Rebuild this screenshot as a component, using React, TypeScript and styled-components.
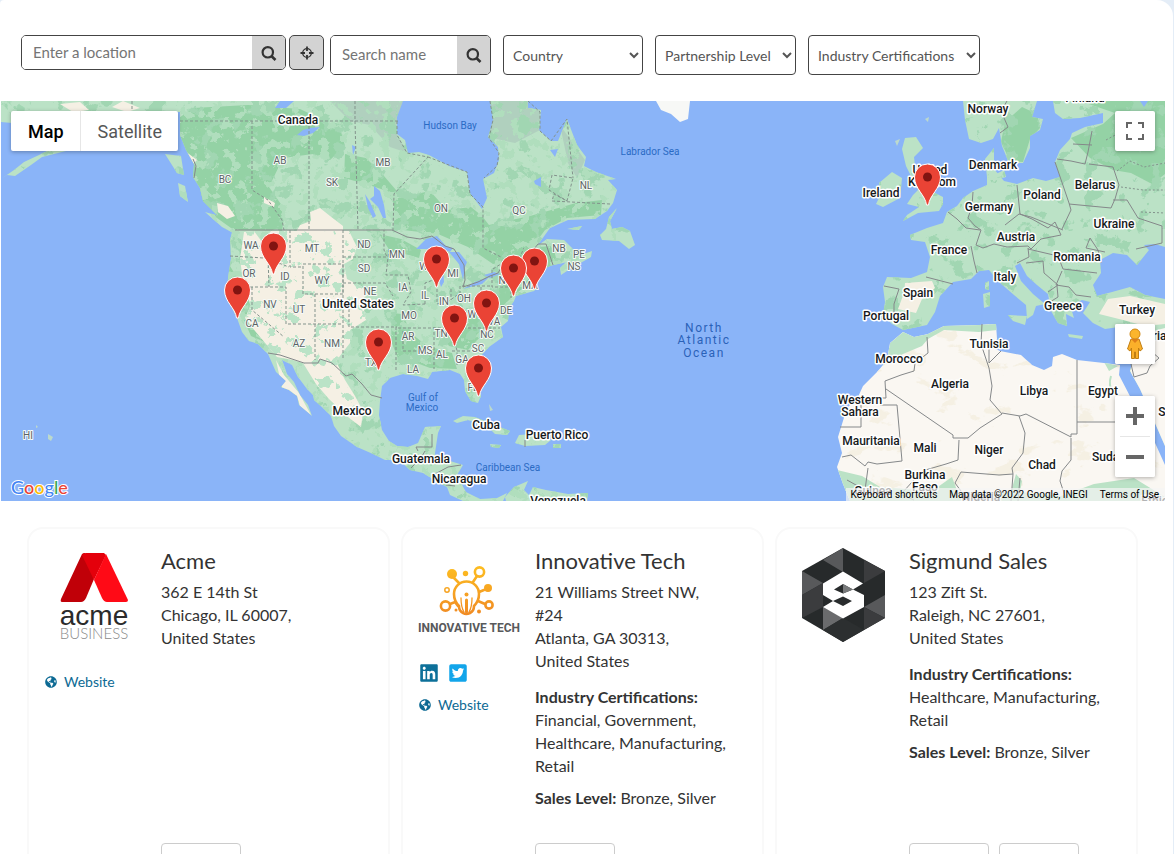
import React from "react";
import styled, { createGlobalStyle } from "styled-components";
import { FaGlobeAmericas, FaLinkedin, FaTwitterSquare } from "react-icons/fa";

const GlobalStyle = createGlobalStyle`
  * { box-sizing: border-box; }
  body {
    margin: 0;
    background: #e4edf7;
    color: #333;
    font-family: Lato, "Open Sans", sans-serif;
    font-size: 16px;
  }
  button, input, select { font-family: inherit; margin: 0; }
`;

const Page = styled.main`
  height: 100vh;
  margin-right: 1px;
  overflow-y: auto;
  scrollbar-width: none;
  background: #fff;
  border-radius: 4px 16px 0 0;
`;

const Filters = styled.form`
  display: flex;
  align-items: flex-start;
  gap: 12px;
  padding: 35px 21px 26px;
`;

const LocationFields = styled.div`
  display: flex;
  gap: 3px;
  margin-right: -6px;
`;

const SearchGroup = styled.div<{ $width: number; $height: number }>`
  display: flex;
  width: ${(p) => p.$width}px;
  height: ${(p) => p.$height}px;
  border: 1px solid #444;
  border-radius: 5px;
  overflow: hidden;
`;

const TextField = styled.input`
  flex: 1;
  min-width: 0;
  border: 0;
  padding: 0 11px 2px;
  font-size: 15px;
  color: #333;
  background: #fff;
  &::placeholder { color: #757575; opacity: 1; }
`;

const IconButton = styled.button`
  display: flex;
  align-items: center;
  justify-content: center;
  width: 33px;
  padding: 0;
  border: 0;
  background: #d3d3d3;
  color: #333;
`;

const LocateButton = styled(IconButton)`
  width: 35px;
  height: 35px;
  border: 1px solid #444;
  border-radius: 5px;
`;

const FilterSelect = styled.select<{ $width: number }>`
  width: ${(p) => p.$width}px;
  height: 40px;
  padding: 0 0 0 5px;
  border: 1px solid #444;
  border-radius: 4px;
  background: #fff;
  color: #555;
  font-size: 14px;
`;

const MapFrame = styled.section`
  position: relative;
  height: 400px;
  margin: 0 8px 0 1px;
  overflow: hidden;
  background: #8ab4f8;
  font-family: Roboto, sans-serif;
`;

const MapDrawing = styled.svg`
  display: block;
  width: 100%;
  height: 100%;
`;

const MapTypes = styled.div`
  position: absolute;
  top: 10px;
  left: 10px;
  display: flex;
  height: 40px;
  background: #fff;
  border-radius: 2px;
  box-shadow: 0 1px 4px rgba(0, 0, 0, 0.3);
`;

const MapType = styled.button<{ $active?: boolean }>`
  padding: 0 16px 0 17px;
  border: 0;
  background: none;
  font-size: 18px;
  font-weight: ${(p) => (p.$active ? 500 : 400)};
  color: ${(p) => (p.$active ? "#000" : "#565656")};
  & + & { border-left: 1px solid #e6e6e6; }
`;

const MapControl = styled.button`
  display: flex;
  align-items: center;
  justify-content: center;
  width: 40px;
  height: 40px;
  padding: 0;
  border: 0;
  border-radius: 2px;
  background: #fff;
  color: #666;
`;

const FullscreenControl = styled(MapControl)`
  position: absolute;
  top: 10px;
  right: 10px;
  box-shadow: 0 1px 4px rgba(0, 0, 0, 0.3);
`;

const MapSideControls = styled.div`
  position: absolute;
  right: 10px;
  bottom: 24px;
  display: flex;
  flex-direction: column;
  gap: 32px;
`;

const ControlBox = styled.div`
  background: #fff;
  border-radius: 2px;
  box-shadow: 0 1px 4px rgba(0, 0, 0, 0.3);
`;

const ControlDivider = styled.div`
  height: 1px;
  margin: 0 5px;
  background: #e6e6e6;
`;

const Attribution = styled.div`
  position: absolute;
  right: 0;
  bottom: 0;
  display: flex;
  gap: 12px;
  padding: 0 6px 0 5px;
  background: rgba(245, 245, 245, 0.7);
  font-size: 10px;
  line-height: 13px;
  color: #000;
`;

const AttributionButton = styled.button`
  padding: 0;
  border: 0;
  background: none;
  font-size: 10px;
  line-height: 13px;
  color: #000;
`;

const AttributionLink = styled.a`
  color: #000;
  text-decoration: none;
`;

const Cards = styled.section`
  display: grid;
  grid-template-columns: repeat(3, 1fr);
  gap: 11px;
  padding: 26px 35px 26px 27px;
`;

const Card = styled.article`
  display: grid;
  grid-template-columns: 100px 1fr;
  column-gap: 16px;
  min-height: 370px;
  padding: 16px 24px 18px 16px;
  border: 2px solid #f9f9f9;
  border-radius: 16px;
`;

const Side = styled.div`
  display: flex;
  flex-direction: column;
  gap: 12px;
`;

const LogoBox = styled.div`
  width: 100px;
  height: 104px;
  svg { overflow: visible; }
`;

const Social = styled.div`
  display: flex;
  gap: 9px;
  margin-top: 2px;
  & + a { margin-top: 0; }
`;

const SocialLink = styled.a<{ $color: string }>`
  display: flex;
  color: ${(p) => p.$color};
`;

const SiteLink = styled.a`
  display: flex;
  align-items: center;
  gap: 7px;
  margin-top: 11px;
  color: #0d6a94;
  font-size: 14px;
  line-height: 20px;
  text-decoration: none;
`;

const Info = styled.div`
  display: flex;
  flex-direction: column;
  line-height: 23px;
`;

const Name = styled.h2`
  margin: 0 0 3px;
  font-size: 22px;
  font-weight: 400;
  line-height: 32px;
`;

const Address = styled.address`
  font-style: normal;
`;

const Detail = styled.p<{ $first?: boolean }>`
  margin: ${(p) => (p.$first ? 13 : 9)}px 0 0;
`;

const Actions = styled.div`
  display: flex;
  gap: 10px;
  margin-top: auto;
`;

const Action = styled.button`
  width: 80px;
  height: 34px;
  border: 1px solid #ccc;
  border-radius: 4px;
  background: #fff;
`;

const SearchIcon = () => (
  <svg width="18" height="18" viewBox="0 0 18 18" fill="none" stroke="currentColor" aria-hidden="true">
    <circle cx="7.800" cy="8.300" r="5.200" strokeWidth="2.200" />
    <path d="M11.600 12.200L15.500 16" strokeWidth="2.600" />
  </svg>
);

const LocateIcon = () => (
  <svg width="16" height="16" viewBox="0 0 16 16" fill="none" stroke="currentColor" aria-hidden="true">
    <circle cx="8" cy="8" r="4.300" strokeWidth="1.300" />
    <path d="M8 1.500v4.500M8 10v4.500M1.500 8h4.500M10 8h4.500" strokeWidth="1.800" />
  </svg>
);

const AcmeLogo = () => (
  <svg width="100" height="104" viewBox="45 545 100 104" role="img" aria-label="Acme Business">
    <path d="M82 554Q83 553 85 553L94 579 86 598Q84 602 81 602H62Q60 602 61 599Z" fill="#c00008" />
    <path d="M82 555Q83 553 86 553H104L106 555 94 580Z" fill="#e4000b" />
    <path d="M106 554L128 600Q128 602 126 602H107Q104 602 102 598L94 580Z" fill="#ff0a16" />
    <text x="94" y="625" textAnchor="middle" fontFamily="Liberation Sans" fontSize="28" fill="#2b2b2b">acme</text>
    <text x="94" y="639" textAnchor="middle" fontFamily="Lato" fontWeight="300" fontSize="15" fill="#8a8a8a">BUSINESS</text>
  </svg>
);

const InnovativeLogo = () => (
  <svg width="100" height="104" viewBox="419 545 100 104" role="img" aria-label="Innovative Tech">
    <defs>
      <linearGradient id="amber" x1="0" y1="566" x2="0" y2="616" gradientUnits="userSpaceOnUse">
        <stop offset="0" stopColor="#fdbd20" />
        <stop offset="1" stopColor="#f08a24" />
      </linearGradient>
    </defs>
    <g stroke="url(#amber)" strokeWidth="2.600" fill="none" strokeLinecap="round">
      <path d="M463 613Q459 611 459 606Q454 601 454 594A12.500 12.500 0 0 1 479 594Q479 601 474 606Q474 611 470 613Q466 615 463 613" />
      <path d="M461 598Q461 607 464 612M472 598Q472 607 469 612" strokeWidth="1.300" />
      <path d="M466.500 600V612" strokeWidth="3" />
      <circle cx="479.500" cy="572" r="4.600" />
      <circle cx="445.500" cy="606" r="4.600" />
      <circle cx="489" cy="605" r="3.600" />
      <circle cx="447" cy="590" r="2.200" strokeWidth="1.500" />
      <path d="M477 576L473 582M454 578L459 583M450 604L455 602L458 606M479 592L484 590M478 601L485 604" />
    </g>
    <g fill="url(#amber)">
      <circle cx="452" cy="574" r="5" />
      <circle cx="465.500" cy="573.500" r="2.700" />
      <circle cx="488" cy="588" r="4" />
      <circle cx="466.500" cy="594.500" r="2" />
      <circle cx="479" cy="611.500" r="2" />
      <circle cx="456" cy="610" r="1.500" />
    </g>
    <text x="469" y="632" textAnchor="middle" fontFamily="Roboto" fontWeight="700" fontSize="12" fill="#58595b">INNOVATIVE TECH</text>
  </svg>
);

const SigmundLogo = () => (
  <svg width="100" height="104" viewBox="793 545 100 104" role="img" aria-label="Sigmund Sales">
    <path d="M843 548L885 571V618L843 642L802 618V571Z" fill="#272a2b" />
    <path d="M843 548V572L823 560ZM802 571L823 583 802 595ZM885 595V618L864 607Z" fill="#58595b" />
    <path d="M864 560L885 571 864 583ZM802 595L823 607 802 618ZM823 595V607L802 595 823 583ZM864 607L885 618 864 630Z" fill="#3b3c3e" />
    <path d="M823 607L843 618 823 630Z" fill="#6a6b6d" />
    <path d="M843 618L864 630 843 642 823 630Z" fill="#2c2f30" />
    <path d="M843 571.500L863 583.500 853 589.500 864 595V607L843 618.500 823 607 833 601 823 595V583.500Z" fill="#fff" />
    <path d="M843 584L853 589.500 843 593.500 834 589.500ZM843 596.500L852 601 843 606 833 601Z" fill="#292c2d" />
    <path d="M843 584L853 589.500 843 593.500Z" fill="#77797a" />
  </svg>
);

const FullscreenIcon = () => (
  <svg width="18" height="18" viewBox="0 0 18 18" fill="none" stroke="currentColor" strokeWidth="2" aria-hidden="true">
    <path d="M1 6V1H6M12 1H17V6M17 12V17H12M6 17H1V12" />
  </svg>
);

const PegmanIcon = () => (
  <svg width="18" height="32" viewBox="0 0 18 32" aria-hidden="true">
    <path d="M5 11H13L16.500 21 14 23 12.500 20V30.500H9.500V24H8.500V30.500H5.500V20L4 23 1.500 21Z" fill="#fbb02a" stroke="#c17f13" strokeWidth="1" />
    <path d="M5 11H13L9 15Z" fill="#df7f1a" />
    <circle cx="9" cy="6" r="5" fill="#fbb52c" stroke="#cf8613" />
  </svg>
);

const northAmerica =
  "M28 101H180L180 135L186 150L194 164L193 177L200 188L203 201L215 213L226 225L233 229L230 240L231 258L228 278L227 290L230 304L237 318L242 332L249 341L258 344L268 354L276 372L286 381L281 387L289 390L297 396L299 405L312 416L308 405L300 395L294 382L287 374L282 360L292 365L298 377L307 389L313 395L314 400L324 409L331 416L334 426L341 436L357 447L373 454L385 460L399 460L410 470L423 473L436 481L447 487L450 495L463 501H503L507 493L497 498L480 499L466 492L461 483L457 475L463 465L450 461L435 459L435 453L438 433L441 426L425 427L418 443L408 447L397 446L389 441L382 430L379 415L380 401L382 386L390 378L403 374L417 376L428 379L432 372L450 370L460 374L464 380L465 391L471 401L478 403L481 396L478 381L473 372L477 360L489 347L503 337L501 327L508 321L509 308L514 301L516 296L534 291L537 288L533 278L545 268L553 265L568 262L576 256L572 248L564 240L547 239L537 246L550 228L568 220L595 219L607 211L613 203L617 190L608 180L616 179L596 172L584 166L586 157L577 145L567 119L558 141L551 141L539 130L541 110L528 108V101Z";
const europe =
  "M963 101L965 120L969 139L981 143L993 139L999 128L1002 146L1009 163L1023 163L1030 148L1030 136L1040 130L1043 119L1032 117L1037 101H1053L1055 113L1063 119L1080 118L1103 113V123L1085 127L1072 133L1070 139L1060 150L1055 162L1060 177L1046 181L1033 178L1017 184L1004 181L999 175L994 169L994 148L985 159L987 177L987 185L973 191L963 198L957 206L947 212L943 223L927 228L910 235L911 240L925 242L930 257L927 272L911 278L887 277L883 287L885 302L883 315L892 324L903 330L927 325L935 312L940 296L953 282L971 279L979 271L989 270L999 282L1014 295L1026 305L1027 319L1033 315L1036 306L1045 304L1033 294L1021 281L1015 266L1020 263L1027 276L1037 285L1048 294L1051 311L1058 323L1067 326L1066 314L1074 318L1070 305L1082 300L1090 302L1083 313L1093 323L1105 329L1119 327L1130 329L1147 329L1144 340L1138 348L1133 360L1130 371L1140 389L1151 414L1165 446V299L1145 295L1130 287L1112 292L1097 296L1093 285L1101 273L1100 260L1113 253L1127 255L1137 265L1149 250L1144 245L1155 244L1165 247V101Z";
const africa =
  "M903 332L890 343L887 360L878 371L863 386L858 397L847 408L838 437L842 453L837 467L843 484L850 501H1165V465L1151 434L1133 402L1119 375L1120 365L1104 363L1077 360L1062 354L1053 357L1052 366L1044 370L1032 365L1021 355L1000 351L992 347L997 339L996 324L980 325L944 326L928 334L914 337Z";
const islands = [
  "M905 138L916 137L923 148L914 157L915 166L926 181L929 190L943 197L943 204L939 211L918 213L903 221L907 215L919 207L907 204L913 195L918 190L912 178L906 166L902 149Z",
  "M879 183L892 172L902 178L900 198L883 207L876 204L881 194Z",
  "M617 208L609 217L606 229L600 235L602 240L619 241L629 249L635 245L630 231L622 227L612 229L610 221Z",
  "M453 421L463 416L475 417L492 424L510 431L507 435L495 434L487 426L468 420L457 423Z",
  "M519 435L533 434L551 440L545 445L525 446L515 443Z",
  "M553 444L561 444L561 448L553 448Z M490 444L501 445L499 448L491 447Z",
  "M505 497L514 487L528 481L524 490L529 495L533 487L546 490L568 494L588 493L587 501H506Z",
  "M983 294L990 292L990 306L984 308Z M985 283L989 281L989 290L985 289Z M1008 315L1027 316L1025 325L1013 321Z",
  "M1068 334L1083 336L1082 339L1069 337Z M992 176L1004 170L1006 177L999 179Z M1119 337L1129 334L1127 340Z",
  "M205 212L219 216L232 227L233 233L222 227Z M178 183L185 186L188 202L180 196Z M165 154L181 156L184 175L177 173Z",
  "M1 179L14 170L24 162L39 155L47 151L56 148L66 151L42 157L31 165L15 176L7 175Z",
  "M567 229L582 226L579 230ZM560 268L566 262L575 257L592 251L591 257L570 269L561 275Z",
  "M1 101H180V112H22L12 123L1 122Z",
];
const desert =
  "M244 232L254 231L262 242L271 231H349L357 247L353 259L344 264L347 279L361 286L369 294L362 299L366 320L350 330V343L336 361L345 380L355 396L363 411L361 427L348 417L329 399L316 384L303 363L293 360L277 357L255 331L245 318L251 305L244 288L240 259Z";
const forest = [
  "M176 120L193 108L248 105L300 109L340 128L345 146L330 160L313 154L283 158L269 187L285 210L282 231L231 230L230 266L244 289L252 310L267 343L251 336L239 309L228 292L231 228L210 213L196 192Z",
  "M394 199L430 191L447 210L471 207L482 216L489 225L530 216L576 203L602 200L601 215L567 218L545 230L534 245L521 259L493 264L468 247L438 234L394 229Z",
  "M494 276L517 260L538 247L553 246L557 262L534 280L514 295L494 315L481 336L468 350L449 346L444 338L464 319L486 304Z",
  "M1022 107L1037 114L1040 128L1030 139L1023 162L1010 161L1001 142L1005 122Z",
  "M1080 101H1165V174L1152 184L1131 173L1113 170L1090 158L1071 138L1103 124L1115 113Z",
  "M392 313L402 314L412 334L427 346L452 353L457 369L430 368L414 362L399 361L391 341Z",
  "M379 234L401 239L421 250L419 258L409 255L390 251Z",
  "M345 154L366 158L384 176L396 190V206L384 190L366 184L344 178Z",
];
const water = [
  "M403 101L397 117L397 134L405 140L408 153L419 152L429 155L449 166L467 172L470 193L482 209L487 198L483 179L494 173L499 160L498 147L488 137L493 120L490 101Z",
  "M416 249L426 239L437 236L446 246L453 248L450 252L437 247L427 249Z",
  "M441 287L438 277L440 259L446 253L443 267L444 282Z",
  "M449 252L459 252L467 262L465 267L463 280L459 264Z",
  "M463 289L475 282L489 277L482 284Z M484 275L494 272L500 274L490 278Z",
  "M374 186L380 191L384 205L386 218L383 218L378 207L370 199L374 196Z M365 194L370 202L376 216L373 218L368 208Z",
  "M297 135L303 130L310 128L320 127L313 133L304 136Z M275 108L280 101H294L286 108Z M352 145L356 147L353 155Z",
  "M550 150L558 149L555 157ZM534 181L541 177L541 187L535 184Z M1140 101L1148 101L1144 107Z",
];
const dashed =
  "M132 101V112M180 121H398M252 121V190L268 200L282 220L284 230M309 121V230M355 101V121L358 230M397 121V135L407 153L428 157L394 194L393 230M428 157L467 172L470 194L483 207V248L501 257M490 101L493 120L489 138L499 153L497 166L484 178M528 101L540 112L540 131L551 141L567 119L573 178M610 204L552 201L554 194L567 201L573 178L552 175L549 190L567 201M343 230V358M343 257H387L384 250V230M343 283H385L393 296M303 264H343V294H303ZM290 230V267H303M230 256L264 258L276 262L289 267M240 287H286V324H343M252 287V310L284 337M268 255L269 287M315 294V360M349 299V327H397M389 249L386 275H408L411 292L403 305L425 304M398 328H500M396 327V370M403 331V351H423M434 327L434 369M452 328L457 351V365M452 351L470 351M425 304V283L436 279M437 289V304L449 301L460 293V286H492M451 289V300M481 287V303L459 326M492 270V287H511V298M493 269L504 262L518 261L524 248M519 270H533M522 260V277";
const borders =
  "M235 230H392L407 237L420 239L432 236L445 246L454 249L464 265L465 280L463 287L478 282L490 276L498 273L504 263L511 259H526L538 244L546 244L553 265M268 353L280 355L304 363H318L320 359L332 363L346 376L352 374L362 384L371 395L382 398M418 451L416 447H432V434M411 468L421 458L425 451M435 474L448 467L461 465M446 485L455 486M193 159L196 166L194 178M525 447V440";
const euroBorders =
  "M1000 133L1008 127L1001 111L1007 101M973 192L972 206L968 218L975 226L981 230L976 245L983 248L994 244L1007 247L1028 246L1031 249L1041 239L1061 235L1055 222L1048 228L1032 219L1020 214L1017 185M948 212L957 219L966 228L980 230M971 246L974 261L977 273M926 277L953 284M884 286L899 289L894 304L894 322M1017 263L1029 257L1028 248M1062 229L1071 210L1069 203L1055 162M1057 159L1071 161L1085 164L1088 152L1092 131M1092 145L1073 144M1089 164L1113 167L1119 185L1115 199L1111 208L1069 204M1113 200L1127 200L1138 218L1162 226L1162 243L1136 249M1101 263L1098 250L1090 238L1086 248L1105 252M1028 249L1058 256L1063 269L1097 273M1026 263L1043 261L1044 273L1058 285L1048 292M1057 286L1058 297L1050 302M1062 271L1056 285L1069 287L1076 295L1091 297M1005 225L1019 214L1031 217L1063 230M927 337L928 353L915 363L914 371L901 375L885 381L886 398L849 398M886 389L953 435V438L968 438L980 428L1002 414L990 400L992 386L989 368L981 344L982 324M1002 413L1020 416L1026 414L1071 437V434H1077V360M1019 416L1025 433L1023 453L1012 468L1013 474L999 475L961 472L955 483L961 491M959 440L958 460L946 464L922 471L903 492M840 427H861V405M880 405H897L902 461L877 464L868 462L865 466L851 455L842 457M1071 438V460L1062 471L1060 481L1066 499M1077 422H1117M1131 364L1134 377L1147 373L1150 366L1159 358L1145 346M868 468L865 490L847 480M989 344L989 363L1001 351M902 495L914 500M1013 474L1011 501M1020 478L1018 501";

const Pin = ({ x, y }: { x: number; y: number }) => (
  <g transform={`translate(${x} ${y})`}>
    <path d="M-1 28C-2 18-13 12-13 0A13 13 0 0 1 13 0C13 12 2 18 1 28Z" fill="#ea4335" stroke="#fff" strokeWidth="1" />
    <circle r="4.500" fill="#811411" />
  </g>
);

type Label = [string, number, number];
const countries: Label[] = [
  ["Canada", 298, 124], ["United States", 358, 308], ["Mexico", 352, 415], ["Cuba", 486, 429],
  ["Puerto Rico", 557, 439], ["Guatemala", 421, 463], ["Nicaragua", 459, 483], ["Venezuela", 558, 505],
  ["Norway", 988, 113], ["Finland", 1085, 102], ["Denmark", 993, 169], ["United", 930, 174],
  ["Kingdom", 932, 186], ["Ireland", 881, 197], ["Belarus", 1095, 189], ["Poland", 1042, 199],
  ["Germany", 989, 211], ["Ukraine", 1114, 228], ["Austria", 1016, 241], ["France", 949, 254],
  ["Romania", 1077, 261], ["Italy", 1005, 281], ["Spain", 918, 297], ["Greece", 1063, 310],
  ["Turkey", 1137, 314], ["Portugal", 886, 320], ["Tunisia", 989, 348], ["Morocco", 899, 363],
  ["Syria", 1153, 340], ["Algeria", 950, 388], ["Libya", 1034, 395], ["Egypt", 1103, 395], ["Western", 860, 404],
  ["Sahara", 860, 416], ["Mauritania", 871, 445], ["Mali", 925, 452], ["Niger", 989, 454],
  ["Sudan", 1109, 461], ["Chad", 1042, 469], ["Burkina", 925, 479], ["Faso", 925, 491],
  ["Guinea", 873, 495], ["Nigeria", 981, 501], ["Ethiopia", 1163, 505], ["S", 1162, 416],
];
const states: Label[] = [
  ["AB", 280, 164], ["BC", 225, 183], ["MB", 383, 166], ["SK", 332, 186], ["ON", 441, 212], ["QC", 519, 214],
  ["NL", 586, 189], ["NB", 559, 252], ["PE", 579, 258], ["NS", 574, 270], ["WA", 251, 249], ["MT", 312, 252],
  ["OR", 249, 277], ["ID", 285, 280], ["WY", 322, 284], ["ND", 364, 248], ["SD", 364, 272], ["MN", 397, 258],
  ["WI", 425, 270], ["MI", 453, 277], ["NE", 370, 295], ["IA", 403, 291], ["IL", 425, 299], ["IN", 444, 305],
  ["OH", 464, 302], ["NY", 505, 284], ["MA", 530, 289], ["DE", 506, 314], ["NV", 270, 308], ["UT", 299, 313],
  ["CA", 252, 327], ["AZ", 299, 347], ["NM", 332, 347], ["MO", 409, 319], ["AR", 408, 340], ["TN", 441, 337],
  ["WV", 475, 318], ["VA", 494, 325], ["NC", 487, 338], ["SC", 478, 352], ["MS", 425, 354], ["AL", 442, 358],
  ["GA", 462, 363], ["LA", 413, 373], ["TX", 371, 366], ["FL", 473, 391], ["HI", 28, 439],
];
const seas: Label[] = [
  ["Hudson Bay", 450, 129], ["Labrador Sea", 650, 155], ["Gulf of", 423, 401], ["Mexico", 422, 411], ["Caribbean Sea", 508, 471],
];
const pins: [number, number][] = [
  [927, 177], [273, 246], [237, 290], [436, 259], [534, 261], [513, 268], [486, 303], [454, 318], [378, 342], [478, 368],
];

const WorldMap = () => (
  <MapDrawing viewBox="1 101 1164 400" preserveAspectRatio="xMidYMid slice" role="img" aria-label="Partner locations">
    <defs>
      <clipPath id="land">
        <path d={northAmerica} />
        <path d={europe} />
        {islands.map((d) => <path key={d} d={d} />)}
      </clipPath>
      <clipPath id="africa"><path d={africa} /></clipPath>
      <clipPath id="desert"><path d={desert} /></clipPath>
      <filter id="woods" x="0" y="0" width="100%" height="100%" colorInterpolationFilters="sRGB">
        <feTurbulence type="fractalNoise" baseFrequency="0.06" numOctaves="6" seed="8" />
        <feColorMatrix values="0 0 0 0 0.63  0 0 0 0 0.84  0 0 0 0 0.7  22 0 0 0 -13" />
      </filter>
      <filter id="clearings" x="0" y="0" width="100%" height="100%" colorInterpolationFilters="sRGB">
        <feTurbulence type="fractalNoise" baseFrequency="0.1" numOctaves="5" seed="21" />
        <feColorMatrix values="0 0 0 0 0.69  0 0 0 0 0.87  0 0 0 0 0.74  0 24 0 0 -14" />
      </filter>
      <filter id="scrub" x="0" y="0" width="100%" height="100%" colorInterpolationFilters="sRGB">
        <feTurbulence type="fractalNoise" baseFrequency="0.09" numOctaves="5" seed="3" />
        <feColorMatrix values="0 0 0 0 0.73  0 0 0 0 0.89  0 0 0 0 0.78  0 24 0 0 -14" />
      </filter>
      <filter id="dunes" x="0" y="0" width="100%" height="100%" colorInterpolationFilters="sRGB">
        <feTurbulence type="fractalNoise" baseFrequency="0.03 0.05" numOctaves="5" seed="5" />
        <feColorMatrix values="0 0 0 0 0.96  0 0 0 0 0.94  0 0 0 0 0.89  20 0 0 0 -13" />
      </filter>
    </defs>
    <rect x="1" y="101" width="1164" height="400" fill="#8ab4f8" />
    <g fill="#bbe2c6">
      <path d={northAmerica} />
      <path d={europe} />
      {islands.map((d) => <path key={d} d={d} />)}
    </g>
    <g clipPath="url(#land)">
      <path d="M330 101H404L397 117V135L408 153L390 147L370 125L350 121ZM490 101H540V130L515 143L488 137ZM560 125L585 160L577 178L568 163Z" fill="#b0d0be" />
      {forest.map((d) => <path key={d} d={d} fill="#94d2a5" />)}
      <rect x="1" y="101" width="1164" height="400" filter="url(#woods)" />
      <rect x="176" y="101" width="440" height="400" filter="url(#clearings)" />
      <path d={desert} fill="#f5f0e4" />
      <path d="M905 283L932 281L935 288L922 299L916 313L898 309L904 293ZM1108 299L1130 296L1165 304V324L1145 326L1123 320L1099 314Z" fill="#f5f0e4" />
      <path d="M1138 335L1165 328V480L1130 371Z" fill="#faf7f2" />
      <path d="M276 360L284 375 299 393 311 415 300 406 297 396 282 388Z" fill="#f5f0e4" />
      <path d="M60 104L80 102L89 110L73 112ZM112 107L123 101L140 108L127 112ZM178 138L185 151L197 160L191 166ZM217 203L228 206L235 216L227 219L218 212ZM264 197L275 203L274 207L264 203ZM310 212L320 208 330 216 343 226 343 232H296L300 225 311 221Z" fill="#f5f0e4" />
    </g>
    <g clipPath="url(#desert)">
      <rect x="236" y="230" width="140" height="200" filter="url(#scrub)" />
    </g>
    <path d={africa} fill="#faf7f2" />
    <g clipPath="url(#africa)">
      <rect x="836" y="320" width="330" height="181" filter="url(#dunes)" />
      <path d="M903 332L890 343L887 360L882 366L903 354L922 346L928 339L944 330L979 332L997 330V323L943 325L925 335ZM837 470L862 476L880 487L932 491L952 477L958 493L1011 492L1016 474L1022 481L1020 492L1061 496L1094 484L1134 478L1165 497V501H837ZM1104 362L1118 366L1109 371Z" fill="#bbe2c6" />
      <path d="M1111 376Q1108 385 1113 394" stroke="#bbe2c6" strokeWidth="2" fill="none" />
    </g>
    {water.map((d) => <path key={d} d={d} fill="#8ab4f8" />)}
    <path d="M656 101H690L688 119L680 122L671 114L661 110Z" fill="#f7f8f6" />
    <path d="M489 404L493 410L490 411ZM36 425L38 427L36 428ZM48 434L53 437L51 441L48 439ZM925 119L929 117L928 122ZM895 141L900 139L897 146Z" fill="#bcd9cc" />
    <path d={dashed} fill="none" stroke="#83938c" strokeWidth="1" strokeDasharray="3 2" />
    <path d="M1106 140L1119 133L1139 139L1155 133M1117 171L1130 161L1144 167L1165 163M1121 187L1143 190L1165 190M1141 212L1165 213" fill="none" stroke="#83938c" strokeWidth="1" strokeDasharray="2 2" />
    <path d={borders + euroBorders} fill="none" stroke="#85888a" strokeWidth="1" />
    <g textAnchor="middle" paintOrder="stroke" strokeLinejoin="round" fontFamily="Roboto">
      <g fontSize="10" fill="#5b6265" stroke="#f5faf6" strokeWidth="2">
        {states.map(([t, x, y]) => <text key={t} x={x} y={y}>{t}</text>)}
      </g>
      <g fontSize="10" fill="#2a6bc4">
        {seas.map(([t, x, y]) => <text key={t} x={x} y={y}>{t}</text>)}
      </g>
      <g fontSize="12" fill="#2a62b8" letterSpacing="1.500">
        <text x="704" y="332">North</text>
        <text x="704" y="344">Atlantic</text>
        <text x="704" y="357">Ocean</text>
      </g>
      <g fontSize="12" fontWeight="500" fill="#16191b" stroke="#fff" strokeWidth="3">
        {countries.map(([t, x, y]) => <text key={t + y} x={x} y={y}>{t}</text>)}
      </g>
    </g>
    {pins.map(([x, y]) => <Pin key={x} x={x + 0.5} y={y} />)}
    <text x="11" y="494" fontFamily="Lato" fontSize="18" fontWeight="500" paintOrder="stroke" stroke="#fff" strokeWidth="2">
      <tspan fill="#4285f4">G</tspan><tspan fill="#ea4335">o</tspan><tspan fill="#fbbc05">o</tspan><tspan fill="#4285f4">g</tspan><tspan fill="#34a853">l</tspan><tspan fill="#ea4335">e</tspan>
    </text>
  </MapDrawing>
);

type Partner = {
  name: string;
  address: string[];
  logo: React.ReactNode;
  social?: boolean;
  website?: boolean;
  certifications?: string;
  level?: string;
  actions: string[];
};

const partners: Partner[] = [
  {
    name: "Acme",
    address: ["362 E 14th St", "Chicago, IL 60007,", "United States"],
    logo: <AcmeLogo />,
    website: true,
    actions: ["Contact"],
  },
  {
    name: "Innovative Tech",
    address: ["21 Williams Street NW,", "#24", "Atlanta, GA 30313,", "United States"],
    logo: <InnovativeLogo />,
    social: true,
    website: true,
    certifications: "Financial, Government, Healthcare, Manufacturing, Retail",
    level: "Bronze, Silver",
    actions: ["Contact"],
  },
  {
    name: "Sigmund Sales",
    address: ["123 Zift St.", "Raleigh, NC 27601,", "United States"],
    logo: <SigmundLogo />,
    certifications: "Healthcare, Manufacturing, Retail",
    level: "Bronze, Silver",
    actions: ["Contact", "Details"],
  },
];

const PartnerCard = ({ partner }: { partner: Partner }) => (
  <Card>
    <Side>
      <LogoBox>{partner.logo}</LogoBox>
      {partner.social && (
        <Social>
          <SocialLink href="#linkedin" aria-label="LinkedIn" $color="#0d7099"><FaLinkedin size={20} /></SocialLink>
          <SocialLink href="#twitter" aria-label="Twitter" $color="#12a5ea"><FaTwitterSquare size={20} /></SocialLink>
        </Social>
      )}
      {partner.website && <SiteLink href="#website"><FaGlobeAmericas size={12} />Website</SiteLink>}
    </Side>
    <Info>
      <Name>{partner.name}</Name>
      <Address>{partner.address.map((line) => <div key={line}>{line}</div>)}</Address>
      {partner.certifications && (
        <Detail $first><strong>Industry Certifications:</strong><br />{partner.certifications}</Detail>
      )}
      {partner.level && <Detail><strong>Sales Level:</strong> {partner.level}</Detail>}
      <Actions>{partner.actions.map((label) => <Action key={label} type="button" aria-label={label} />)}</Actions>
    </Info>
  </Card>
);

export default function App() {
  return (
    <Page>
      <GlobalStyle />
      <Filters onSubmit={(e) => e.preventDefault()}>
        <LocationFields>
          <SearchGroup $width={265} $height={35}>
            <TextField aria-label="Location" placeholder="Enter a location" />
            <IconButton type="submit" aria-label="Search location"><SearchIcon /></IconButton>
          </SearchGroup>
          <LocateButton type="button" aria-label="Use my location"><LocateIcon /></LocateButton>
        </LocationFields>
        <SearchGroup $width={161} $height={40}>
          <TextField aria-label="Name" placeholder="Search name" />
          <IconButton type="submit" aria-label="Search by name"><SearchIcon /></IconButton>
        </SearchGroup>
        <FilterSelect $width={140} aria-label="Country"><option>Country</option></FilterSelect>
        <FilterSelect $width={141} aria-label="Partnership Level"><option>Partnership Level</option></FilterSelect>
        <FilterSelect $width={172} aria-label="Industry Certifications"><option>Industry Certifications</option></FilterSelect>
      </Filters>
      <MapFrame>
        <WorldMap />
        <MapTypes>
          <MapType type="button" $active>Map</MapType>
          <MapType type="button">Satellite</MapType>
        </MapTypes>
        <FullscreenControl type="button" aria-label="Toggle fullscreen"><FullscreenIcon /></FullscreenControl>
        <MapSideControls>
          <ControlBox><MapControl type="button" aria-label="Street View"><PegmanIcon /></MapControl></ControlBox>
          <ControlBox>
            <MapControl type="button" aria-label="Zoom in">
              <svg width="18" height="18" viewBox="0 0 18 18" stroke="currentColor" strokeWidth="4"><path d="M0 9H18M9 0V18" /></svg>
            </MapControl>
            <ControlDivider />
            <MapControl type="button" aria-label="Zoom out">
              <svg width="18" height="18" viewBox="0 0 18 18" stroke="currentColor" strokeWidth="4"><path d="M0 9H18" /></svg>
            </MapControl>
          </ControlBox>
        </MapSideControls>
        <Attribution>
          <AttributionButton type="button">Keyboard shortcuts</AttributionButton>
          <span>Map data ©2022 Google, INEGI</span>
          <AttributionLink href="#terms">Terms of Use</AttributionLink>
        </Attribution>
      </MapFrame>
      <Cards>{partners.map((p) => <PartnerCard key={p.name} partner={p} />)}</Cards>
    </Page>
  );
}
